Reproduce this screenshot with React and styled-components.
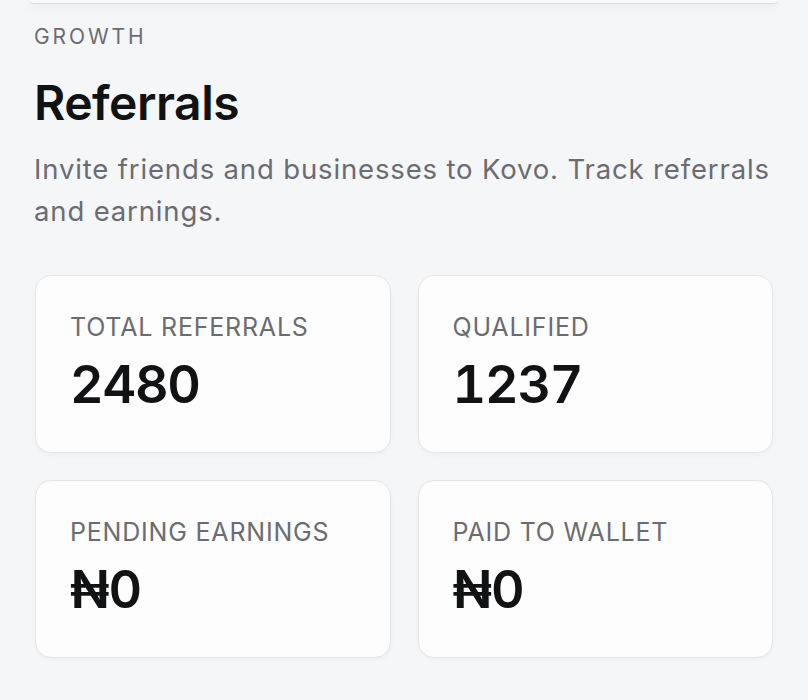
import React from "react";
import styled, { createGlobalStyle } from "styled-components";

const GlobalStyle = createGlobalStyle`
  body {
    margin: 0;
    background: #f5f6f8;
    font-family: Inter, "Noto Sans", "DejaVu Sans", sans-serif;
    -webkit-font-smoothing: antialiased;
  }
`;

const stats = [
  { label: "TOTAL REFERRALS", value: "2480" },
  { label: "QUALIFIED", value: "1237" },
  { label: "PENDING EARNINGS", value: "₦0" },
  { label: "PAID TO WALLET", value: "₦0" },
];

const App = () => (
  <>
    <GlobalStyle />
    <Page>
      <TopBar />
      <Eyebrow>GROWTH</Eyebrow>
      <Title>Referrals</Title>
      <Lead>Invite friends and businesses to Kovo. Track referrals and earnings.</Lead>
      <Grid>
        {stats.map((s) => (
          <Card key={s.label}>
            <Label>{s.label}</Label>
            <Value>{s.value}</Value>
          </Card>
        ))}
      </Grid>
    </Page>
  </>
);

const Page = styled.div`
  width: 808px;
  height: 700px;
  box-sizing: border-box;
  padding: 0 35px 0 34px;
  overflow: hidden;
`;

const TopBar = styled.div`
  height: 3px;
  margin: 0 -4px;
  background: #fafafb;
  border-radius: 0 0 16px 16px;
  box-shadow: 0 3px 10px rgba(0, 0, 0, 0.1), 0 1px 0 #dfe0e3;
`;

const Eyebrow = styled.div`
  margin-top: 21px;
  font-size: 21px;
  line-height: 26px;
  letter-spacing: 2.9px;
  color: #6b6c72;
`;

const Title = styled.h1`
  margin: 25px 0 0;
  font-size: 48px;
  line-height: 56px;
  font-weight: 600;
  letter-spacing: -0.5px;
  color: #111214;
`;

const Lead = styled.p`
  margin: 17px 0 0;
  font-size: 27.5px;
  line-height: 42px;
  letter-spacing: 0.85px;
  color: #6b6c72;
`;

const Grid = styled.div`
  display: grid;
  grid-template-columns: 1fr 1fr;
  gap: 27px;
  margin-top: 43px;
  padding-left: 1px;
`;

const Card = styled.div`
  height: 178px;
  box-sizing: border-box;
  padding: 36px 34px 0;
  background: #fdfdfd;
  border: 1.5px solid #e4e5e8;
  border-radius: 16px;
  box-shadow: 0 2px 4px rgba(0, 0, 0, 0.03);
`;

const Label = styled.div`
  font-size: 25px;
  line-height: 30px;
  letter-spacing: 0.8px;
  color: #6b6c72;
`;

const Value = styled.div`
  margin-top: 13px;
  font-size: 52px;
  line-height: 60px;
  font-weight: 600;
  letter-spacing: -1.2px;
  font-variant-numeric: tabular-nums;
  color: #111214;
`;

export default App;
